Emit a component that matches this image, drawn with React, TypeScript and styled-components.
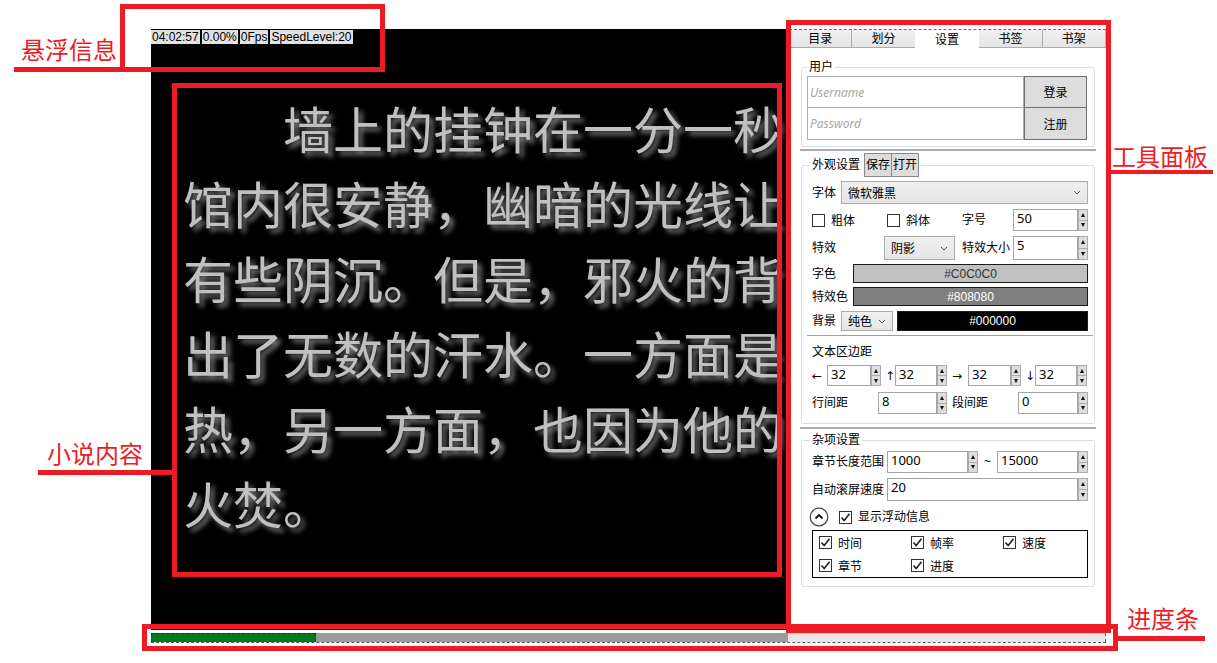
import React from "react";
import styled, { createGlobalStyle, css } from "styled-components";

const RED = "#ED1C24";

const GlobalStyle = createGlobalStyle`
  html, body { margin: 0; padding: 0; background: #fff; }
  body { font-family: "Noto Sans", "Noto Sans CJK SC", sans-serif; color: #000; }
  * { box-sizing: border-box; }
`;

const Page = styled.div`
  position: relative;
  width: 1217px;
  height: 663px;
  overflow: hidden;
  background: #fff;
  padding: 29px 0 0 151px;
`;

const AppWindow = styled.div`
  width: 955px;
  display: flex;
  flex-direction: column;
`;

const MainRow = styled.div`
  display: flex;
  height: 601px;
`;

const Reader = styled.div`
  position: relative;
  width: 638px;
  flex: none;
  background: #000;
  overflow: hidden;
`;

const StatusBar = styled.div`
  position: absolute;
  top: 1px;
  left: 0;
  display: flex;
  gap: 2px;
  z-index: 2;
`;

const StatusItem = styled.span`
  background: #e2e2e2;
  color: #000;
  font-family: "Liberation Sans", Arial, sans-serif;
  font-size: 12px;
  line-height: 14px;
  padding: 0 1px;
`;

const NovelText = styled.div`
  padding: 61px 0 0 32px;
  font-family: "Noto Sans CJK SC", sans-serif;
  font-size: 50px;
  line-height: 75px;
  color: #c0c0c0;
  text-shadow: 4px 4px 5px #7a7a7a;
  white-space: nowrap;
`;

const NovelLine = styled.div<{ $indent?: boolean }>`
  padding-left: ${(p) => (p.$indent ? "100px" : "0")};
`;

const ToolPanel = styled.div`
  flex: 1;
  display: flex;
  flex-direction: column;
  background: #fff;
  font-size: 12px;
`;

const TabStrip = styled.div`
  display: flex;
  border-top: 1px dashed #6a6a6a;
  height: 19px;
`;

const Tab = styled.div<{ $active?: boolean }>`
  flex: 1;
  height: 18px;
  display: flex;
  align-items: center;
  justify-content: center;
  font-size: 12px;
  line-height: 16px;
  border: 1px solid #acacac;
  border-top: none;
  margin-left: -1px;
  background: linear-gradient(#f0f0f0, #e5e5e5);
  ${(p) =>
    p.$active &&
    css`
      background: #fff;
      border-color: transparent;
      border-bottom: none;
      height: 19px;
      position: relative;
      z-index: 1;
    `}
`;

const PanelBody = styled.div`
  display: flex;
  flex-direction: column;
  padding: 11px 11px 0 12px;
`;

const Group = styled.fieldset<{ $pad: string }>`
  margin: 0;
  min-width: 0;
  padding: ${(p) => p.$pad};
  border: 1px solid #d5dfe5;
  border-radius: 3px;
  display: flex;
  flex-direction: column;
`;

const Legend = styled.legend<{ $shift?: number }>`
  padding: 0 2px;
  margin-left: ${(p) => p.$shift ?? 0}px;
  font-size: 12px;
  line-height: 16px;
  display: flex;
  align-items: center;
`;

const LegendButton = styled.span`
  display: flex;
  align-items: center;
  justify-content: center;
  width: 28px;
  height: 24px;
  background: #dddddd;
  border: 1px solid #8a8a8a;
  & + & {
    margin-left: -1px;
  }
`;

const LegendText = styled.span`
  margin-right: 4px;
`;

const Separator = styled.div<{ $mt: number; $mb: number }>`
  height: 2px;
  background: #ababab;
  margin: ${(p) => p.$mt}px -1px ${(p) => p.$mb}px;
`;

const InnerSeparator = styled.div`
  height: 1px;
  background: #a0a0a0;
  margin: 4px -5px 0 -5px;
`;

const LoginGrid = styled.div`
  display: grid;
  grid-template-columns: 1fr 63px;
  grid-template-rows: 32px 32px;
`;

const TextInput = styled.div`
  border: 1px solid #abadb3;
  background: #fff;
  display: flex;
  align-items: center;
  padding-left: 2px;
  font-style: italic;
  color: #a8a8a8;
  font-size: 12px;
`;

const LowerInput = styled(TextInput)`
  margin-top: -1px;
`;

const PlainButton = styled.div<{ $lower?: boolean }>`
  display: flex;
  align-items: center;
  justify-content: center;
  background: #dddddd;
  border: 1px solid #707070;
  font-size: 12px;
  margin-top: ${(p) => (p.$lower ? "-1px" : "0")};
`;

const Row = styled.div<{ $h: number; $mt?: number }>`
  display: flex;
  align-items: center;
  height: ${(p) => p.$h}px;
  margin-top: ${(p) => p.$mt ?? 0}px;
  flex: none;
`;

const Label = styled.span<{ $w?: number; $center?: boolean }>`
  flex: none;
  width: ${(p) => (p.$w ? `${p.$w}px` : "auto")};
  text-align: ${(p) => (p.$center ? "center" : "left")};
  font-size: 12px;
  line-height: 16px;
  white-space: nowrap;
`;

const Combo = styled.div<{ $w?: number }>`
  height: 100%;
  ${(p) => (p.$w ? `width: ${p.$w}px; flex: none;` : "flex: 1;")}
  display: flex;
  align-items: center;
  justify-content: space-between;
  padding: 0 6px 0 6px;
  border: 1px solid #acacac;
  background: linear-gradient(#f0f0f0, #e5e5e5);
  font-size: 12px;
`;

const ColorBox = styled.div<{ $bg: string; $fg: string }>`
  flex: 1;
  height: 100%;
  display: flex;
  align-items: center;
  justify-content: center;
  background: ${(p) => p.$bg};
  color: ${(p) => p.$fg};
  border: 1px solid #1a1a1a;
  font-family: "Liberation Sans", Arial, sans-serif;
  font-size: 12px;
`;

const CheckItem = styled.span<{ $w?: number }>`
  display: flex;
  align-items: center;
  flex: none;
  width: ${(p) => (p.$w ? `${p.$w}px` : "auto")};
`;

const CheckBoxBox = styled.span`
  width: 13px;
  height: 13px;
  border: 1px solid #333;
  background: #fff;
  display: flex;
  align-items: center;
  justify-content: center;
  margin-right: 6px;
  flex: none;
`;

const Spin = styled.div<{ $w?: number }>`
  display: flex;
  height: 100%;
  ${(p) => (p.$w ? `width: ${p.$w}px; flex: none;` : "flex: 1;")}
`;

const SpinField = styled.div`
  flex: 1;
  border: 1px solid #a5a5a5;
  background: #fff;
  padding: 0 3px;
  font-family: "Noto Sans", sans-serif;
  font-size: 13px;
  line-height: 17px;
`;

const SpinButtons = styled.div`
  width: 10px;
  display: flex;
  flex-direction: column;
`;

const SpinButton = styled.div<{ $down?: boolean }>`
  flex: 1;
  background: #dedede;
  border: 1px solid #acacac;
  display: flex;
  align-items: center;
  justify-content: center;
  & + & {
    border-top: none;
  }
  &::after {
    content: "";
    border-left: 2.5px solid transparent;
    border-right: 2.5px solid transparent;
    ${(p) =>
      p.$down
        ? "border-top: 4px solid #111;"
        : "border-bottom: 4px solid #111;"}
  }
`;

const Arrow = styled.span<{ $w: number }>`
  flex: none;
  width: ${(p) => p.$w}px;
  font-family: "DejaVu Sans", sans-serif;
  font-size: 12px;
  line-height: 16px;
  overflow: hidden;
`;

const Gap = styled.span<{ $w: number }>`
  flex: none;
  width: ${(p) => p.$w}px;
`;

const CollapseIcon = styled.span`
  width: 20px;
  height: 20px;
  flex: none;
  margin: 0 10px 0 -3px;
  display: flex;
`;

const OptionsBox = styled.div`
  margin-top: 3px;
  height: 48px;
  border: 1px solid #000;
  display: grid;
  grid-template-columns: 92px 92px 1fr;
  grid-template-rows: 23px 23px;
  padding: 0 0 0 6px;
  align-items: center;
`;

const ProgressTrack = styled.div`
  display: flex;
  height: 10px;
  margin-top: 3px;
  border-bottom: 1px dashed #555;
`;

const ProgressFill = styled.div`
  width: 165px;
  background: #037a1f;
  border: 1px dashed #034a14;
  border-bottom: none;
`;

const ProgressRest = styled.div`
  width: 472px;
  background: #9b9b9b;
`;

const ProgressBlank = styled.div`
  flex: 1;
  background: #e8e8e8;
  border-top: 1px solid #d0d0d0;
  border-right: 1px dashed #555;
`;

/* annotation overlays */
const AnnoBox = styled.div`
  position: absolute;
  border: 5px solid ${RED};
  z-index: 10;
  pointer-events: none;
`;

const AnnoLine = styled.div`
  position: absolute;
  background: ${RED};
  z-index: 10;
`;

const AnnoLabel = styled.div`
  position: absolute;
  color: ${RED};
  font-family: "Noto Sans CJK SC", sans-serif;
  font-size: 24px;
  line-height: 24px;
  white-space: nowrap;
  z-index: 10;
`;

const Chevron = () => (
  <svg width="8" height="5" viewBox="0 0 8 5">
    <polyline points="1,1 4,4 7,1" fill="none" stroke="#555" strokeWidth="1" />
  </svg>
);

const Check = ({ checked }: { checked?: boolean }) => (
  <CheckBoxBox>
    {checked && (
      <svg width="11" height="11" viewBox="0 0 11 11">
        <polyline points="1.5,5.5 4.2,8.5 9.5,1.8" fill="none" stroke="#222" strokeWidth="1.6" />
      </svg>
    )}
  </CheckBoxBox>
);

const Spinner = ({ value, w }: { value: string; w?: number }) => (
  <Spin $w={w}>
    <SpinField>{value}</SpinField>
    <SpinButtons>
      <SpinButton />
      <SpinButton $down />
    </SpinButtons>
  </Spin>
);

const lines = [
  "墙上的挂钟在一分一秒",
  "馆内很安静，幽暗的光线让",
  "有些阴沉。但是，邪火的背",
  "出了无数的汗水。一方面是",
  "热，另一方面，也因为他的",
  "火焚。",
];

export default function App() {
  return (
    <Page>
      <GlobalStyle />
      <AppWindow>
        <MainRow>
          <Reader>
            <StatusBar>
              <StatusItem>04:02:57</StatusItem>
              <StatusItem>0.00%</StatusItem>
              <StatusItem>0Fps</StatusItem>
              <StatusItem>SpeedLevel:20</StatusItem>
            </StatusBar>
            <NovelText>
              {lines.map((l, i) => (
                <NovelLine key={i} $indent={i === 0}>
                  {l}
                </NovelLine>
              ))}
            </NovelText>
          </Reader>
          <ToolPanel>
            <TabStrip>
              <Tab>目录</Tab>
              <Tab>划分</Tab>
              <Tab $active>设置</Tab>
              <Tab>书签</Tab>
              <Tab>书架</Tab>
            </TabStrip>
            <PanelBody>
              <Group $pad="1px 7px 6px 5px">
                <Legend>用户</Legend>
                <LoginGrid>
                  <TextInput>Username</TextInput>
                  <PlainButton>登录</PlainButton>
                  <LowerInput>Password</LowerInput>
                  <PlainButton $lower>注册</PlainButton>
                </LoginGrid>
              </Group>
              <Separator $mt={2} $mb={2} />
              <Group $pad="4px 6px 9px 10px">
                <Legend $shift={-2}>
                  <LegendText>外观设置</LegendText>
                  <LegendButton>保存</LegendButton>
                  <LegendButton>打开</LegendButton>
                </Legend>
                <Row $h={23}>
                  <Label $w={29}>字体</Label>
                  <Combo>
                    <span>微软雅黑</span>
                    <Chevron />
                  </Combo>
                </Row>
                <Row $h={22} $mt={5}>
                  <CheckItem $w={75}>
                    <Check />
                    粗体
                  </CheckItem>
                  <CheckItem $w={75}>
                    <Check />
                    斜体
                  </CheckItem>
                  <Label $w={51}>字号</Label>
                  <Spinner value="50" />
                </Row>
                <Row $h={24} $mt={5}>
                  <Label $w={72}>特效</Label>
                  <Combo $w={71}>
                    <span>阴影</span>
                    <Chevron />
                  </Combo>
                  <Gap $w={7} />
                  <Label $w={51}>特效大小</Label>
                  <Spinner value="5" />
                </Row>
                <Row $h={19} $mt={4}>
                  <Label $w={41}>字色</Label>
                  <ColorBox $bg="#C0C0C0" $fg="#333">#C0C0C0</ColorBox>
                </Row>
                <Row $h={19} $mt={4}>
                  <Label $w={41}>特效色</Label>
                  <ColorBox $bg="#808080" $fg="#fff">#808080</ColorBox>
                </Row>
                <Row $h={20} $mt={5}>
                  <Label $w={29}>背景</Label>
                  <Combo $w={52}>
                    <span>纯色</span>
                    <Chevron />
                  </Combo>
                  <Gap $w={4} />
                  <ColorBox $bg="#000" $fg="#fff">#000000</ColorBox>
                </Row>
                <InnerSeparator />
                <Row $h={16} $mt={8}>
                  <Label>文本区边距</Label>
                </Row>
                <Row $h={21} $mt={5}>
                  <Arrow $w={15}>←</Arrow>
                  <Spinner value="32" w={54} />
                  <Gap $w={4} />
                  <Arrow $w={10}>↑</Arrow>
                  <Spinner value="32" w={52} />
                  <Gap $w={5} />
                  <Arrow $w={16}>→</Arrow>
                  <Spinner value="32" w={53} />
                  <Gap $w={4} />
                  <Arrow $w={10}>↓</Arrow>
                  <Spinner value="32" w={52} />
                </Row>
                <Row $h={22} $mt={6}>
                  <Label $w={66}>行间距</Label>
                  <Spinner value="8" w={69} />
                  <Gap $w={5} />
                  <Label $w={66}>段间距</Label>
                  <Spinner value="0" />
                </Row>
              </Group>
              <Separator $mt={3} $mb={3} />
              <Group $pad="3px 6px 8px 10px">
                <Legend $shift={-2}>杂项设置</Legend>
                <Row $h={22}>
                  <Label $w={75}>章节长度范围</Label>
                  <Spinner value="1000" w={91} />
                  <Label $w={19} $center>
                    ~
                  </Label>
                  <Spinner value="15000" />
                </Row>
                <Row $h={23} $mt={5}>
                  <Label $w={75}>自动滚屏速度</Label>
                  <Spinner value="20" />
                </Row>
                <Row $h={20} $mt={6}>
                  <CollapseIcon>
                    <svg width="20" height="20" viewBox="0 0 20 20">
                      <circle cx="10" cy="10" r="8.8" fill="#fff" stroke="#444" strokeWidth="1.2" />
                      <polyline points="6.5,11.5 10,8 13.5,11.5" fill="none" stroke="#111" strokeWidth="1.8" />
                    </svg>
                  </CollapseIcon>
                  <Check checked />
                  <Label>显示浮动信息</Label>
                </Row>
                <OptionsBox>
                  <CheckItem>
                    <Check checked />
                    时间
                  </CheckItem>
                  <CheckItem>
                    <Check checked />
                    帧率
                  </CheckItem>
                  <CheckItem>
                    <Check checked />
                    速度
                  </CheckItem>
                  <CheckItem>
                    <Check checked />
                    章节
                  </CheckItem>
                  <CheckItem>
                    <Check checked />
                    进度
                  </CheckItem>
                </OptionsBox>
              </Group>
            </PanelBody>
          </ToolPanel>
        </MainRow>
        <ProgressTrack>
          <ProgressFill />
          <ProgressRest />
          <ProgressBlank />
        </ProgressTrack>
      </AppWindow>

      <AnnoBox style={{ left: 120, top: 4, width: 265, height: 68 }} />
      <AnnoLine style={{ left: 14, top: 67, width: 108, height: 5 }} />
      <AnnoLabel style={{ left: 21, top: 37 }}>悬浮信息</AnnoLabel>

      <AnnoBox style={{ left: 172, top: 83, width: 610, height: 494 }} />
      <AnnoLine style={{ left: 38, top: 470, width: 136, height: 5 }} />
      <AnnoLabel style={{ left: 47, top: 441 }}>小说内容</AnnoLabel>

      <AnnoBox style={{ left: 786, top: 20, width: 325, height: 613 }} />
      <AnnoLine style={{ left: 1107, top: 170, width: 106, height: 4 }} />
      <AnnoLabel style={{ left: 1112, top: 144 }}>工具面板</AnnoLabel>

      <AnnoBox style={{ left: 142, top: 624, width: 976, height: 27 }} />
      <AnnoLine style={{ left: 1116, top: 636, width: 89, height: 5 }} />
      <AnnoLabel style={{ left: 1127, top: 606 }}>进度条</AnnoLabel>
    </Page>
  );
}
